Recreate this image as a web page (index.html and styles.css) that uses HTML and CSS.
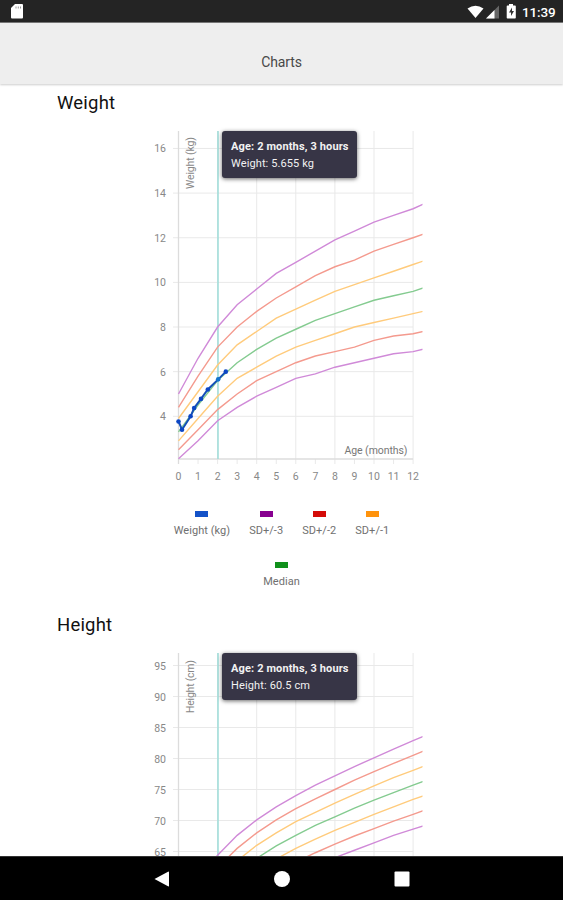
FILE: index.html
```
<!DOCTYPE html>
<html lang="en">
<head>
  <meta charset="UTF-8">
  <meta name="viewport" content="width=device-width, initial-scale=1.0">
  <title>Charts</title>
  <link rel="stylesheet" href="styles.css">
</head>
<body>
  <div class="status-bar">
    <svg class="sd-icon" width="14" height="17" viewBox="0 0 14 17">
      <path d="M5 1h7q1 0 1 1v12.500q0 1-1 1H2q-1 0-1-1V5z" fill="#fff"/>
      <path d="M6 3.500v2M8.300 3.500v2M10.500 3.500v2" stroke="#999" stroke-width="1"/>
    </svg>
    <div class="status-right">
      <svg width="50" height="17" viewBox="0 0 50 17">
        <path d="M0.5 4.5Q8.500-1 16.500 4.500L8.500 14z" transform="translate(0 1)" fill="#fff"/>
        <path d="M19 15.500L32 2.500V15.500z" fill="#666"/>
        <path d="M19 15.500L27.500 7V15.500z" fill="#fff"/>
        <path d="M42 1h4v1.500h2q.8 0 .8.8v11.400q0 .8-.8.800h-7.500q-.800 0-.800-.800V3.300q0-.800.800-.800H42z" fill="#fff"/>
        <path d="M45 4.500L42 9.500h2v3.500l3-5h-2z" fill="#333"/>
      </svg>
      <span class="time">11:39</span>
    </div>
  </div>
  <header class="header">Charts</header>

  <main class="content">
    <section class="chart-section">
      <h2>Weight</h2>
      <svg class="chart" id="weight-chart" width="290" height="370"></svg>
      <div class="legend">
        <div class="legend-item"><span class="swatch blue"></span>Weight (kg)</div>
        <div class="legend-item"><span class="swatch purple"></span>SD+/-3</div>
        <div class="legend-item"><span class="swatch red"></span>SD+/-2</div>
        <div class="legend-item"><span class="swatch orange"></span>SD+/-1</div>
      </div>
      <div class="legend">
        <div class="legend-item"><span class="swatch green"></span>Median</div>
      </div>
    </section>
    <section class="chart-section">
      <h2>Height</h2>
      <svg class="chart" id="height-chart" width="290" height="370"></svg>
    </section>
  </main>

  <nav class="nav-bar">
    <svg width="18" height="18" viewBox="0 0 18 18"><path d="M1.500 9L15 1.700q1-.5 1 .5v13.600q0 1-1 .5z" fill="#fff"/></svg>
    <svg width="18" height="18" viewBox="0 0 18 18"><circle cx="9" cy="9" r="8" fill="#fff"/></svg>
    <svg width="18" height="18" viewBox="0 0 18 18"><rect x="1.500" y="1.500" width="15" height="15" rx="1" fill="#fff"/></svg>
  </nav>

  <script>
    const purple = "#d08ad8", red = "#f49a8e", orange = "#ffcb7c", green = "#84cb90";
    const colors = [purple, red, orange, green, orange, red, purple];

    const left = 38.5;
    const top0 = 6;
    const bottom = 334;
    const step = 19.55;

    // SD+3 down to SD-3, one value per month
    const weight = [
      [5, 6.6, 8, 9, 9.7, 10.4, 10.9, 11.4, 11.9, 12.3, 12.7, 13, 13.3, 13.7],
      [4.4, 5.8, 7.1, 8, 8.7, 9.3, 9.8, 10.3, 10.7, 11, 11.4, 11.7, 12, 12.3],
      [3.9, 5.1, 6.3, 7.2, 7.8, 8.4, 8.8, 9.2, 9.6, 9.9, 10.2, 10.5, 10.8, 11.1],
      [3.3, 4.5, 5.6, 6.4, 7, 7.5, 7.9, 8.3, 8.6, 8.9, 9.2, 9.4, 9.6, 9.9],
      [2.9, 3.9, 4.9, 5.7, 6.2, 6.7, 7.1, 7.4, 7.7, 8, 8.2, 8.4, 8.6, 8.8],
      [2.5, 3.4, 4.3, 5, 5.6, 6, 6.4, 6.7, 6.9, 7.1, 7.4, 7.6, 7.7, 7.9],
      [2.1, 2.9, 3.8, 4.4, 4.9, 5.3, 5.7, 5.9, 6.2, 6.4, 6.6, 6.8, 6.9, 7.1]
    ];
    const height = [
      [55.6, 60.6, 64.4, 67.6, 70.1, 72.2, 74, 75.7, 77.2, 78.7, 80.1, 81.5, 82.9, 84.2],
      [53.7, 58.6, 62.4, 65.5, 68, 70.1, 71.9, 73.5, 75, 76.5, 77.9, 79.2, 80.5, 81.8],
      [51.8, 56.7, 60.4, 63.5, 66, 68, 69.8, 71.3, 72.8, 74.2, 75.6, 76.9, 78.1, 79.3],
      [49.9, 54.7, 58.4, 61.4, 63.9, 65.9, 67.6, 69.2, 70.6, 72, 73.3, 74.5, 75.7, 76.9],
      [48, 52.8, 56.4, 59.4, 61.8, 63.8, 65.5, 67, 68.4, 69.7, 71, 72.2, 73.4, 74.5],
      [46.1, 50.8, 54.4, 57.3, 59.7, 61.7, 63.3, 64.8, 66.2, 67.5, 68.7, 69.9, 71, 72.1],
      [44.2, 48.9, 52.4, 55.3, 57.6, 59.6, 61.2, 62.7, 64, 65.2, 66.4, 67.6, 68.6, 69.6]
    ];
    const baby = [[0, 3.77], [0.18, 3.4], [0.62, 4], [0.8, 4.37], [1.15, 4.78], [1.5, 5.2], [2.03, 5.655], [2.42, 6]];

    function line(x1, y1, x2, y2, cls) {
      return `<line x1="${x1}" y1="${y1}" x2="${x2}" y2="${y2}" class="${cls}"/>`;
    }

    function drawChart(id, data, opts) {
      const x = m => left + m * step;
      const y = v => opts.base - (v - opts.from) * opts.scale;
      let out = `<clipPath id="${id}-clip"><rect x="35" y="0" width="247.500" height="336"/></clipPath>`;

      // Grid and axis labels
      for (let v = opts.from; v <= opts.to; v += opts.every) {
        out += line(33, y(v), x(12), y(v), "grid-line");
        out += `<text x="26" y="${y(v) + 4}" text-anchor="end" class="tick">${v}</text>`;
      }
      for (let m = 0; m <= 12; m++) {
        if (m % 2 === 0) out += line(x(m), top0, x(m), bottom + 5, m ? "grid-line" : "axis-line");
        else out += line(x(m), bottom, x(m), bottom + 5, "grid-line");
        if (opts.monthLabels) out += `<text x="${x(m)}" y="355" text-anchor="middle" class="tick">${m}</text>`;
      }
      out += line(left, bottom, x(12), bottom, "axis-line");
      out += `<text transform="translate(54 ${opts.titleEnd}) rotate(-90)" textLength="${opts.titleLen}" class="tick">${opts.title}</text>`;
      if (opts.monthLabels) out += `<text x="204.500" y="328.500" textLength="63" class="tick age">Age (months)</text>`;
      out += line(78, top0, 78, bottom, "marker");

      // Growth curves
      data.forEach((row, i) => {
        const points = row.map((v, m) => `${x(m)},${y(v)}`).join(" ");
        out += `<polyline points="${points}" stroke="${colors[i]}" class="curve" clip-path="url(#${id}-clip)"/>`;
      });
      if (opts.points) {
        out += `<polyline points="${opts.points.map(p => `${x(p[0])},${y(p[1])}`).join(" ")}" class="baby-line"/>`;
        opts.points.forEach((p, i) => out += `<circle cx="${x(p[0])}" cy="${y(p[1])}" r="2.300" class="dot${i === 6 ? " selected" : ""}"/>`);
      }

      // Tooltip
      out += `<g class="tooltip"><rect x="82" y="6" width="135" height="47" rx="3"/>
        <text x="91" y="24.500" textLength="117.500" class="bold">Age: 2 months, 3 hours</text>
        <text x="91" y="41.500" textLength="${opts.valueLen}">${opts.value}</text></g>`;
      document.getElementById(id).innerHTML = out;
    }

    drawChart("weight-chart", weight, {
      base: 291.3, from: 4, to: 16, every: 2, scale: 22.32, points: baby, monthLabels: true,
      title: "Weight (kg)", titleEnd: 64, titleLen: 52,
      value: "Weight: 5.655 kg", valueLen: 83
    });
    drawChart("height-chart", height, {
      base: 204.5, from: 65, to: 95, every: 5, scale: 6.2,
      title: "Height (cm)", titleEnd: 66, titleLen: 53,
      value: "Height: 60.5 cm", valueLen: 79
    });
  </script>
</body>
</html>
```
FILE: styles.css
```
* {
  box-sizing: border-box;
}

body {
  font-family: Roboto, sans-serif;
  background-color: #fff;
  margin: 0;
  height: 900px;
  display: flex;
  flex-direction: column;
  overflow: hidden;
}

.status-bar {
  background-color: #242424;
  height: 23px;
  display: flex;
  justify-content: space-between;
  align-items: flex-start;
  padding: 3px 7px 0 10px;
  border-bottom: 1px solid #777;
  flex-shrink: 0;
}

.status-right {
  display: flex;
  gap: 5px;
}

.time {
  color: #fff;
  font-size: 13.5px;
  font-weight: 500;
  line-height: 19px;
  letter-spacing: -0.15px;
  width: 34px;
  white-space: nowrap;
}

.header {
  background-color: #eee;
  height: 61px;
  padding-top: 31px;
  text-align: center;
  font-size: 14px;
  line-height: 16px;
  letter-spacing: -0.1px;
  color: #484848;
  box-shadow: 0 1px 2px rgba(0, 0, 0, 0.2);
  flex-shrink: 0;
}

.content {
  flex: 1;
  min-height: 0;
  overflow: hidden;
}

.chart-section {
  height: 522px;
  padding-top: 7px;
}

h2 {
  margin: 0 0 10px 57px;
  font-size: 18.5px;
  line-height: 24px;
  font-weight: 400;
  letter-spacing: 0.2px;
  color: #111;
}

.chart {
  display: block;
  margin-left: 140px;
}

.legend {
  display: flex;
  justify-content: center;
  gap: 19px;
  height: 50px;
  padding-top: 16px;
}

.chart + .legend {
  height: 51px;
}

.legend-item {
  display: flex;
  flex-direction: column;
  align-items: center;
  gap: 7px;
  font-size: 11px;
  line-height: 14px;
  letter-spacing: 0.05px;
  color: #707070;
}

.swatch {
  width: 13px;
  height: 6px;
}

.blue { background-color: #1452c8; }
.purple { background-color: #880090; }
.red { background-color: #d40b08; }
.orange { background-color: #ff930c; }
.green { background-color: #10901b; }

/* Charts */
.grid-line {
  stroke: #e9e9e9;
  stroke-width: 1;
}

.axis-line {
  stroke: #dcdcdc;
  stroke-width: 1.3;
}

.tick {
  font-size: 10.5px;
  fill: #888;
}

.age {
  fill: #777;
}

.curve {
  fill: none;
  stroke-width: 1.4;
}

.baby-line {
  fill: none;
  stroke: #1450b8;
  stroke-width: 2;
}

.dot {
  fill: #0c46c4;
}

.selected {
  fill: #1272cc;
}

.marker {
  stroke: #9cdcd8;
  stroke-width: 1.5;
}

.tooltip rect {
  fill: #373546;
  filter: drop-shadow(0 1px 2px rgba(0, 0, 0, 0.6));
}

.tooltip text {
  font-size: 11px;
  fill: #f2f2f2;
}

.tooltip .bold {
  font-weight: 700;
}

.nav-bar {
  background-color: #000;
  height: 44px;
  display: flex;
  justify-content: center;
  align-items: center;
  gap: 102px;
  border-top: 1px solid #333;
  flex-shrink: 0;
}
```
